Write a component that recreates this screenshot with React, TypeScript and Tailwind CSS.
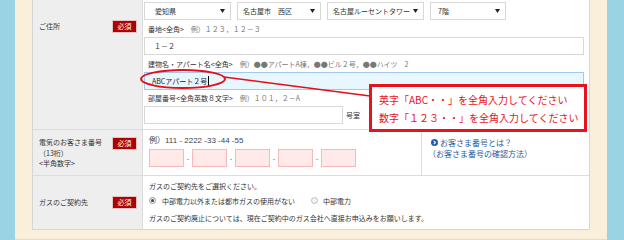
const Badge = () => (
  <div className="w-[25px] h-[13px] bg-[#b00000] border border-[#e2c6c6] text-white text-[7px] leading-[11px] flex items-center justify-center shrink-0">
    必須
  </div>
);

const Arrow = () => (
  <svg width="5" height="4" viewBox="0 0 5 4" className="shrink-0">
    <path d="M0 0 H5 L2.5 4 Z" fill="#222" />
  </svg>
);

const Select = ({ label, w, pl }: { label: string; w: string; pl: string }) => (
  <div className={`${w} ${pl} h-[18px] border border-[#d8d8d8] bg-white flex items-center justify-between pr-[5px] text-[#333]`}>
    <span>{label}</span>
    <Arrow />
  </div>
);

const FieldLabel = ({ name, example, h }: { name: string; example: string; h: string }) => (
  <div className={`${h} flex items-center pl-[4px] whitespace-nowrap`}>
    <span className="text-[#333]">{name}</span>
    <span className="text-[#777] pl-[7px]">{example}</span>
  </div>
);

const PinkBox = () => <div className="w-[35px] h-[18px] bg-[#ffe9e9] border border-[#f5b9b9]" />;

export default function App() {
  const selects = [
    { label: "愛知県", w: "w-[87px]", pl: "pl-[10px]" },
    { label: "名古屋市　西区", w: "w-[84px]", pl: "pl-[5px]" },
    { label: "名古屋ルーセントタワー", w: "w-[97px]", pl: "pl-[5px]" },
    { label: "7階", w: "w-[76px]", pl: "pl-[7px]" },
  ];

  return (
    <div className="relative w-[624px] h-[240px] flex bg-[#9ad3e3] font-['Noto_Sans_CJK_JP',sans-serif] text-[7px] leading-[12px] overflow-hidden">
      <div className="w-[15px] shrink-0" />
      <div className="w-[592px] shrink-0 bg-[#f9efda] px-[17px] pb-[13px] border-b border-[#e6dcc6]">
        <div className="border border-t-0 border-[#d6d6d6] bg-white grid grid-cols-[110px_1fr]">
          {/* row 1 */}
          <div className="bg-[#eeeeee] border-r border-b border-[#dcdcdc] flex items-start justify-between pl-[6px] pr-[5px] pt-[20px]">
            <span className="text-[#333] leading-[13px]">ご住所</span>
            <Badge />
          </div>
          <div className="border-b border-[#dcdcdc] pl-px pr-[5px] pt-[2px] pb-[5px] flex flex-col">
            <div className="flex h-[18px] gap-[6px]">
              {selects.map((s) => (
                <Select key={s.label} label={s.label} w={s.w} pl={s.pl} />
              ))}
            </div>
            <FieldLabel h="h-[17px]" name="番地<全角>" example="例）１２３，１２－３" />
            <div className="h-[18px] border border-[#d8d8d8] flex items-center pl-[9px] text-[#333]">１－２</div>
            <FieldLabel
              h="h-[17px]"
              name="建物名・アパート名<全角>"
              example="例）●●アパートA棟，●●ビル２号，●●ハイツ　2"
            />
            <div className="h-[18px] border border-[#a3c8ee] bg-[#e8f7fe] flex items-center pl-[7px] text-[#222]">
              ABCアパート２号
              <span className="w-px h-[10px] bg-black ml-px" />
            </div>
            <FieldLabel h="h-[16px]" name="部屋番号<全角英数８文字>" example="例）１０１，２－A" />
            <div className="flex items-center h-[18px]">
              <div className="w-[199px] h-[18px] border border-[#d8d8d8]" />
              <span className="pl-[3px] text-[#333]">号室</span>
            </div>
          </div>

          {/* row 2 */}
          <div className="bg-[#eeeeee] border-r border-b border-[#dcdcdc] flex items-start justify-between pl-[6px] pr-[5px] pt-[6px] pb-[6px]">
            <div className="text-[#333] leading-[10.5px] pt-px">
              <div>電気のお客さま番号</div>
              <div>（13桁）</div>
              <div>&lt;半角数字&gt;</div>
            </div>
            <div className="pt-px">
              <Badge />
            </div>
          </div>
          <div className="border-b border-[#dcdcdc] grid grid-cols-[279px_1fr]">
            <div className="border-r border-[#dcdcdc] pl-[6px] pt-[5px] pb-[6px]">
              <div className="text-[#444] h-[12px] leading-[12px] text-[8px] font-['Liberation_Sans','Noto_Sans_CJK_JP',sans-serif]">
                例）111 - 2222 -33 -44 -55
              </div>
              <div className="flex items-center gap-[2px] mt-[2px] text-[#555]">
                <PinkBox />
                <span className="w-[4px] text-center">-</span>
                <PinkBox />
                <span className="w-[4px] text-center">-</span>
                <PinkBox />
                <span className="w-[4px] text-center">-</span>
                <PinkBox />
                <span className="w-[4px] text-center">-</span>
                <PinkBox />
              </div>
            </div>
            <div className="pl-[6px] pt-[7px] leading-[11px] text-[8px] text-[#2a5a9c]">
              <div className="flex items-center gap-[2px] pl-[3px]">
                <svg width="7" height="7" viewBox="0 0 10 10" className="shrink-0">
                  <circle cx="5" cy="5" r="5" fill="#1f5cae" />
                  <path d="M4 2.6 L6.4 5 L4 7.4" fill="none" stroke="#fff" strokeWidth="1.6" />
                </svg>
                <span>お客さま番号とは？</span>
              </div>
              <div>（お客さま番号の確認方法）</div>
            </div>
          </div>

          {/* row 3 */}
          <div className="bg-[#eeeeee] border-r border-[#dcdcdc] flex items-center justify-between pl-[6px] pr-[5px]">
            <span className="text-[#333]">ガスのご契約先</span>
            <Badge />
          </div>
          <div className="pl-[6px] pt-[4px] pb-[5px] text-[#333] whitespace-nowrap">
            <div className="h-[12px]">ガスのご契約先をご選択ください。</div>
            <div className="h-[12px] mt-[3px] flex items-center">
              <span className="w-[7px] h-[7px] rounded-full border border-[#999] bg-[#eee] flex items-center justify-center">
                <span className="w-[3px] h-[3px] rounded-full bg-[#444]" />
              </span>
              <span className="pl-[6px]">中部電力以外または都市ガスの使用がない</span>
              <span className="ml-[16px] w-[7px] h-[7px] rounded-full border border-[#bbb] bg-[#f2f2f2]" />
              <span className="pl-[5px]">中部電力</span>
            </div>
            <div className="h-[12px] mt-[5px]">
              ガスのご契約廃止については、現在ご契約中のガス会社へ直接お申込みをお願いします。
            </div>
          </div>
        </div>
      </div>
      <div className="w-[17px] shrink-0" />

      <svg className="absolute inset-0 pointer-events-none" width="624" height="240">
        <ellipse cx="183" cy="79" rx="42" ry="9" fill="none" stroke="#e3101a" strokeWidth="2" />
        <line x1="224" y1="77" x2="370" y2="96" stroke="#e3101a" strokeWidth="1.6" />
      </svg>

      <div className="absolute left-[369px] top-[84px] w-[218px] h-[48px] bg-white border-[3px] border-[#e8121c] pl-[7px] pt-[4px] text-[10px] leading-[18px] text-[#e8121c] whitespace-nowrap">
        <div>英字「ABC・・」を全角入力してください</div>
        <div>数字「１２３・・」を全角入力してください</div>
      </div>
    </div>
  );
}
